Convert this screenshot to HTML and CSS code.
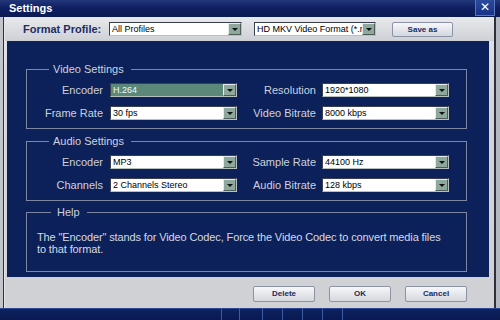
FILE: index.html
```html
<!DOCTYPE html>
<html>
<head>
<meta charset="utf-8">
<link rel="stylesheet" href="styles.css">
</head>
<body>
<div class="window">
  <div class="titlebar">
    <span class="title">Settings</span>
    <span class="close">✕</span>
  </div>
  <div class="frame">
    <div class="edge-left"></div>
    <div class="main">
      <div class="toolbar">
        <span class="tb-label">Format Profile:</span>
        <div class="select sel-profile"><span class="val">All Profiles</span><span class="arrow"></span></div>
        <div class="select sel-format"><span class="val">HD MKV Video Format (*.mkv)</span><span class="arrow"></span></div>
        <button class="btn btn-save">Save as</button>
      </div>
      <div class="content">
        <fieldset class="group">
          <legend>Video Settings</legend>
          <div class="grid">
            <span class="lbl">Encoder</span>
            <div class="select hl"><span class="val">H.264</span><span class="arrow"></span></div>
            <span class="lbl">Resolution</span>
            <div class="select"><span class="val">1920*1080</span><span class="arrow"></span></div>
            <span class="lbl">Frame Rate</span>
            <div class="select"><span class="val">30 fps</span><span class="arrow"></span></div>
            <span class="lbl">Video Bitrate</span>
            <div class="select"><span class="val">8000 kbps</span><span class="arrow"></span></div>
          </div>
        </fieldset>
        <fieldset class="group">
          <legend>Audio Settings</legend>
          <div class="grid">
            <span class="lbl">Encoder</span>
            <div class="select"><span class="val">MP3</span><span class="arrow"></span></div>
            <span class="lbl">Sample Rate</span>
            <div class="select"><span class="val">44100 Hz</span><span class="arrow"></span></div>
            <span class="lbl">Channels</span>
            <div class="select"><span class="val">2 Channels Stereo</span><span class="arrow"></span></div>
            <span class="lbl">Audio Bitrate</span>
            <div class="select"><span class="val">128 kbps</span><span class="arrow"></span></div>
          </div>
        </fieldset>
        <fieldset class="group help">
          <legend>Help</legend>
          <p class="help-text">The "Encoder" stands for Video Codec, Force the Video Codec to convert media files to that format.</p>
        </fieldset>
      </div>
      <div class="footer">
        <button class="btn">Delete</button>
        <button class="btn">OK</button>
        <button class="btn">Cancel</button>
      </div>
    </div>
    <div class="edge-right"></div>
  </div>
  <div class="taskbar">
    <span class="tk w222"></span><span class="tk w18"></span><span class="tk w23"></span><span class="tk w20"></span><span class="tk w20"></span><span class="tk w20"></span><span class="tk w20"></span><span class="tk grow"></span>
  </div>
</div>
</body>
</html>
```

FILE: styles.css
```css
* { box-sizing: border-box; }
html, body { margin: 0; padding: 0; }
body {
  width: 500px;
  height: 320px;
  overflow: hidden;
  font-family: "Liberation Sans", Arial, sans-serif;
  background: #0b1d55;
}
.window {
  width: 500px;
  height: 320px;
  display: flex;
  flex-direction: column;
}
.titlebar {
  height: 17px;
  flex: none;
  display: flex;
  align-items: center;
  justify-content: space-between;
  background: linear-gradient(#22377a, #0e2062 45%, #0a1a52);
  padding-left: 9px;
  padding-right: 5px;
}
.title {
  color: #fff;
  font-weight: bold;
  font-size: 11px;
  line-height: 13px;
}
.close {
  width: 20px;
  height: 16px;
  align-self: flex-start;
  background: linear-gradient(#2a4a9c, #17338a);
  border: 1px solid #5c74b8;
  border-top: none;
  color: #fff;
  font-weight: bold;
  font-size: 12px;
  line-height: 15px;
  text-align: center;
  font-family: "DejaVu Sans", sans-serif;
}
.frame {
  height: 291px;
  flex: none;
  display: flex;
}
.edge-left {
  width: 5px;
  flex: none;
  background: linear-gradient(to right, #c2c5cc 0 3px, #2b303a 3px 4px, #e2e4e8 4px);
}
.edge-right {
  width: 6px;
  flex: none;
  background: linear-gradient(to right, #2b303a 0 2px, #b4b8c0 2px);
}
.main {
  flex: 1;
  display: flex;
  flex-direction: column;
  background: linear-gradient(#e4e5e8, #d2d4d8 30%, #cfd1d5);
}
.toolbar {
  height: 24px;
  flex: none;
  display: flex;
  align-items: center;
  padding-left: 18px;
  background: linear-gradient(#e8e9ec, #cdd0d5);
}
.tb-label {
  font-weight: bold;
  font-size: 11px;
  color: #1e2c66;
  margin-right: 8px;
  width: 78px;
  white-space: nowrap;
}
.select {
  height: 14px;
  display: flex;
  align-items: stretch;
  background: #fff;
  border: 1px solid;
  border-color: #3a4050 #b8c0c0 #b8c0c0 #3a4050;
  font-size: 9px;
  color: #000;
  overflow: hidden;
}
.select .val {
  flex: 1;
  padding-left: 2px;
  line-height: 12px;
  white-space: nowrap;
  overflow: hidden;
}
.select .arrow {
  width: 13px;
  flex: none;
  background: #8fa89d;
  border: 1px solid;
  border-color: #e6ecea #4d5e58 #4d5e58 #e6ecea;
  position: relative;
}
.select .arrow::after {
  content: "";
  position: absolute;
  left: 3px;
  top: 4px;
  border-left: 3px solid transparent;
  border-right: 3px solid transparent;
  border-top: 3px solid #111;
}
.select.hl { background: #5b8878; color: #f4f8f6; }
.sel-profile { width: 133px; }
.sel-format { width: 122px; margin-left: 12px; }
.btn {
  height: 16px;
  width: 62px;
  padding: 0;
  border: 1px solid #8c93a4;
  border-radius: 2px;
  background: linear-gradient(#f6f7f9, #e2e4ea 60%, #d4d7de);
  font-family: "Liberation Sans", Arial, sans-serif;
  font-weight: bold;
  font-size: 8px;
  color: #1c2a5e;
  line-height: 14px;
}
.btn-save { width: 61px; margin-left: 16px; height: 15px; }
.content {
  flex: none;
  margin: 0 5px 0 2px;
  background: #0c215a;
  padding: 22px 22px 5px 19px;
  display: flex;
  flex-direction: column;
}
.group {
  margin: 0;
  padding: 0;
  border: 1px solid #7d87a2;
  min-width: 0;
}
.group + .group { margin-top: 6px; }
.group.help { margin-top: 5px; }
.group legend {
  margin-left: 22px;
  padding: 0 7px 0 4px;
  font-size: 11px;
  line-height: 13px;
  color: #cdd1de;
}
.group.help legend { padding-left: 6px; margin-left: 24px; }
.grid {
  display: grid;
  grid-template-columns: 83px 127px 85px 127px;
  row-gap: 9px;
  padding: 7px 0 8px 0;
  align-items: center;
}
.lbl {
  font-size: 11px;
  color: #cdd1de;
  text-align: right;
  white-space: nowrap;
  line-height: 14px;
}
.grid .lbl:nth-child(4n+1) { padding-right: 7px; }
.grid .lbl:nth-child(4n+3) { padding-right: 6px; }
.help-text {
  margin: 0;
  padding: 12px 19px 16px 10px;
  font-size: 11px;
  line-height: 12px;
  letter-spacing: -0.12px;
  color: #d6d9e4;
}
.footer {
  flex: 1;
  display: flex;
  justify-content: flex-end;
  align-items: flex-start;
  gap: 14px;
  padding-top: 9px;
  padding-right: 27px;
}
.taskbar {
  height: 12px;
  flex: none;
  display: flex;
  background: linear-gradient(#2a4690 0 1px, #0d2260 1px, #091a50);
}
.tk { border-right: 1px solid #3d5aa4; flex: none; }
.w222 { width: 222px; }
.w18 { width: 18px; }
.w23 { width: 23px; }
.w20 { width: 20px; }
.grow { flex: 1; border-right: none; }
```
